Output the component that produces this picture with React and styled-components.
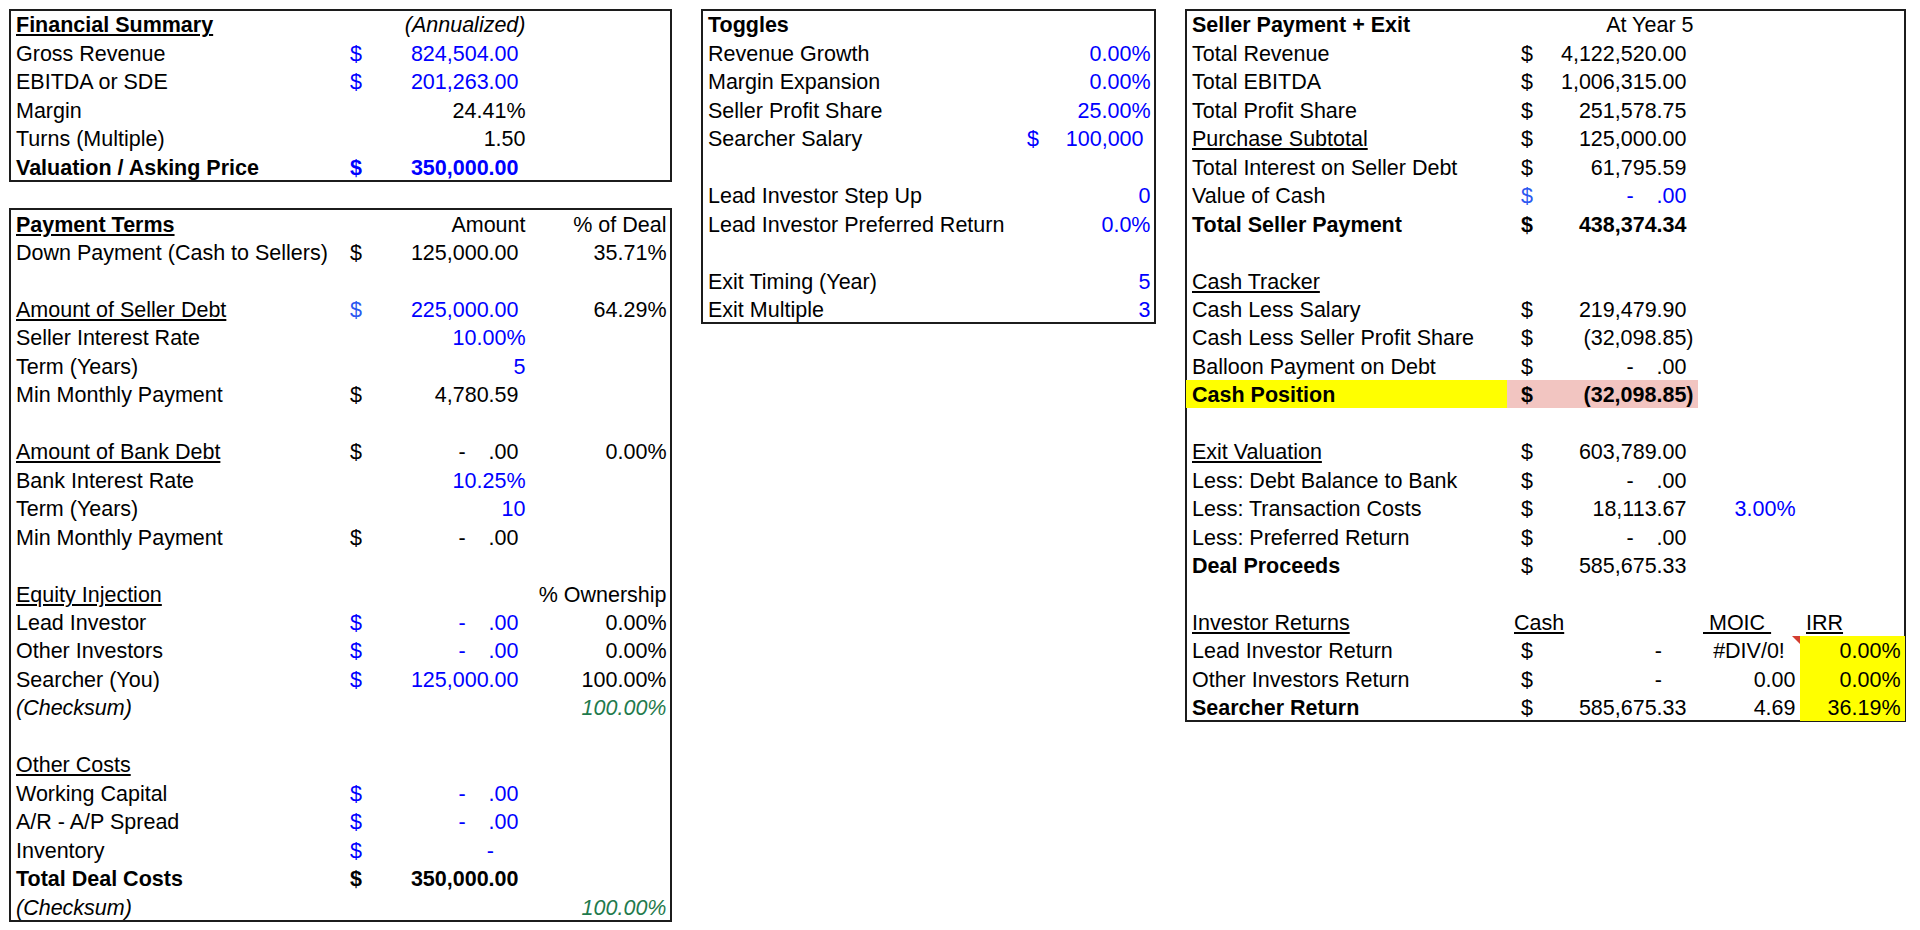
import React from 'react';
import styled, { createGlobalStyle } from 'styled-components';

// sheet metrics, taken from the spreadsheet grid
const ROW = 28.46;
const BLUE = '#0000ff';
const SOFT_BLUE = '#2b58f0';
const GREEN = '#1f7a4d';

const GlobalStyle = createGlobalStyle`
  html, body {
    margin: 0;
    background: #fff;
  }
  body {
    font-family: "Liberation Sans", Arial, sans-serif;
    color: #000;
  }
`;

const Sheet = styled.main`
  display: flex;
  align-items: flex-start;
  gap: 31px;
  padding: 10px;
  font-size: 21.5px;
`;

const Stack = styled.div`
  display: flex;
  flex-direction: column;
  gap: ${ROW}px;
`;

const Panel = styled.section`
  --cols: ${(p) => p.$cols};
  --dl: ${(p) => p.$dollar}px;
  width: ${(p) => p.$w}px;
  outline: 2px solid #1c1c1c;
  outline-offset: -1px;
`;

const Row = styled.div`
  display: grid;
  grid-template-columns: var(--cols);
  height: ${ROW}px;
`;

const Cell = styled.div`
  position: relative;
  display: flex;
  align-items: flex-end;
  justify-content: ${(p) =>
    p.$align === 'right' ? 'flex-end' : p.$align === 'center' ? 'center' : 'flex-start'};
  padding: 0 4.5px 2px ${(p) => (p.$pl != null ? p.$pl : 6)}px;
  line-height: 22px;
  white-space: pre;
  min-width: 0;
  color: ${(p) => p.$color || '#000'};
  font-weight: ${(p) => (p.$bold ? 700 : 400)};
  font-style: ${(p) => (p.$italic ? 'italic' : 'normal')};
  background: ${(p) => p.$bg || 'transparent'};
`;

const MoneyCell = styled(Cell)`
  justify-content: space-between;
  padding-left: var(--dl);
`;

const Dollar = styled.span`
  color: ${(p) => p.$color};
`;

const Amt = styled.span`
  display: inline-flex;
  gap: 23px;
  padding-right: ${(p) => (p.$neg ? 0 : p.$dash ? 31.5 : 7)}px;
`;

const U = styled.span`
  text-decoration: underline;
  text-decoration-thickness: 1.5px;
  text-underline-offset: 2px;
`;

const CommentMark = styled.span`
  position: absolute;
  top: 0;
  right: 0;
  width: 0;
  height: 0;
  border-top: 8px solid #d43d2f;
  border-left: 8px solid transparent;
`;

const Empty = () => <Row />;

// accounting style: "$" on the left, figure on the right
const Money = ({ children, color = '#000', dollar, bold, neg, dash, bg }) => (
  <MoneyCell $color={color} $bold={bold} $bg={bg}>
    <Dollar $color={dollar || color}>$</Dollar>
    <Amt $neg={neg} $dash={dash}>{children}</Amt>
  </MoneyCell>
);

// the "-   .00" zero cells
const Zero = ({ color, dollar }) => (
  <Money color={color} dollar={dollar}>
    <span>-</span>
    <span>.00</span>
  </Money>
);

const Num = ({ children, color, bold, italic, bg }) => (
  <Cell $align="right" $color={color} $bold={bold} $italic={italic} $bg={bg}>
    {children}
  </Cell>
);

const Label = ({ children, bold, italic, u, bg }) => (
  <Cell $bold={bold} $italic={italic} $bg={bg}>
    {u ? <U>{children}</U> : children}
  </Cell>
);

const LEFT_COLS = '331px 189px 1fr';
const TOGGLE_COLS = '318px 1fr';
const EXIT_COLS = '321px 191px 102px 1fr';

function FinancialSummary() {
  return (
    <Panel $w={661} $cols={LEFT_COLS} $dollar={9}>
      <Row>
        <Label bold u>Financial Summary</Label>
        <Num italic>(Annualized)</Num>
      </Row>
      <Row>
        <Label>Gross Revenue</Label>
        <Money color={BLUE}>824,504.00</Money>
      </Row>
      <Row>
        <Label>EBITDA or SDE</Label>
        <Money color={BLUE}>201,263.00</Money>
      </Row>
      <Row>
        <Label>Margin</Label>
        <Num>24.41%</Num>
      </Row>
      <Row>
        <Label>Turns (Multiple)</Label>
        <Num>1.50</Num>
      </Row>
      <Row>
        <Label bold>Valuation / Asking Price</Label>
        <Money color={BLUE} bold>350,000.00</Money>
      </Row>
    </Panel>
  );
}

function PaymentTerms() {
  return (
    <Panel $w={661} $cols={LEFT_COLS} $dollar={9}>
      <Row>
        <Label bold u>Payment Terms</Label>
        <Num>Amount</Num>
        <Num>% of Deal</Num>
      </Row>
      <Row>
        <Label>Down Payment (Cash to Sellers)</Label>
        <Money>125,000.00</Money>
        <Num>35.71%</Num>
      </Row>
      <Empty />
      <Row>
        <Label u>Amount of Seller Debt</Label>
        <Money color={BLUE} dollar={SOFT_BLUE}>225,000.00</Money>
        <Num>64.29%</Num>
      </Row>
      <Row>
        <Label>Seller Interest Rate</Label>
        <Num color={BLUE}>10.00%</Num>
      </Row>
      <Row>
        <Label>Term (Years)</Label>
        <Num color={BLUE}>5</Num>
      </Row>
      <Row>
        <Label>Min Monthly Payment</Label>
        <Money>4,780.59</Money>
      </Row>
      <Empty />
      <Row>
        <Label u>Amount of Bank Debt</Label>
        <Zero />
        <Num>0.00%</Num>
      </Row>
      <Row>
        <Label>Bank Interest Rate</Label>
        <Num color={BLUE}>10.25%</Num>
      </Row>
      <Row>
        <Label>Term (Years)</Label>
        <Num color={BLUE}>10</Num>
      </Row>
      <Row>
        <Label>Min Monthly Payment</Label>
        <Zero />
      </Row>
      <Empty />
      <Row>
        <Label u>Equity Injection</Label>
        <Cell />
        <Num>% Ownership</Num>
      </Row>
      <Row>
        <Label>Lead Investor</Label>
        <Zero color={BLUE} />
        <Num>0.00%</Num>
      </Row>
      <Row>
        <Label>Other Investors</Label>
        <Zero color={BLUE} />
        <Num>0.00%</Num>
      </Row>
      <Row>
        <Label>Searcher (You)</Label>
        <Money color={BLUE}>125,000.00</Money>
        <Num>100.00%</Num>
      </Row>
      <Row>
        <Label italic>(Checksum)</Label>
        <Cell />
        <Num italic color={GREEN}>100.00%</Num>
      </Row>
      <Empty />
      <Row>
        <Label u>Other Costs</Label>
      </Row>
      <Row>
        <Label>Working Capital</Label>
        <Zero color={BLUE} />
      </Row>
      <Row>
        <Label>A/R - A/P Spread</Label>
        <Zero color={BLUE} />
      </Row>
      <Row>
        <Label>Inventory</Label>
        <Money color={BLUE} dash>-</Money>
      </Row>
      <Row>
        <Label bold>Total Deal Costs</Label>
        <Money bold>350,000.00</Money>
      </Row>
      <Row>
        <Label italic>(Checksum)</Label>
        <Cell />
        <Num italic color={GREEN}>100.00%</Num>
      </Row>
    </Panel>
  );
}

function Toggles() {
  return (
    <Panel $w={453} $cols={TOGGLE_COLS} $dollar={7}>
      <Row>
        <Label bold>Toggles</Label>
      </Row>
      <Row>
        <Label>Revenue Growth</Label>
        <Num color={BLUE}>0.00%</Num>
      </Row>
      <Row>
        <Label>Margin Expansion</Label>
        <Num color={BLUE}>0.00%</Num>
      </Row>
      <Row>
        <Label>Seller Profit Share</Label>
        <Num color={BLUE}>25.00%</Num>
      </Row>
      <Row>
        <Label>Searcher Salary</Label>
        <Money color={BLUE}>100,000</Money>
      </Row>
      <Empty />
      <Row>
        <Label>Lead Investor Step Up</Label>
        <Num color={BLUE}>0</Num>
      </Row>
      <Row>
        <Label>Lead Investor Preferred Return</Label>
        <Num color={BLUE}>0.0%</Num>
      </Row>
      <Empty />
      <Row>
        <Label>Exit Timing (Year)</Label>
        <Num color={BLUE}>5</Num>
      </Row>
      <Row>
        <Label>Exit Multiple</Label>
        <Num color={BLUE}>3</Num>
      </Row>
    </Panel>
  );
}

function SellerPayment() {
  return (
    <Panel $w={719} $cols={EXIT_COLS} $dollar={14}>
      <Row>
        <Label bold>Seller Payment + Exit</Label>
        <Num>At Year 5</Num>
      </Row>
      <Row>
        <Label>Total Revenue</Label>
        <Money>4,122,520.00</Money>
      </Row>
      <Row>
        <Label>Total EBITDA</Label>
        <Money>1,006,315.00</Money>
      </Row>
      <Row>
        <Label>Total Profit Share</Label>
        <Money>251,578.75</Money>
      </Row>
      <Row>
        <Label u>Purchase Subtotal</Label>
        <Money>125,000.00</Money>
      </Row>
      <Row>
        <Label>Total Interest on Seller Debt</Label>
        <Money>61,795.59</Money>
      </Row>
      <Row>
        <Label>Value of Cash</Label>
        <Zero color={BLUE} dollar={SOFT_BLUE} />
      </Row>
      <Row>
        <Label bold>Total Seller Payment</Label>
        <Money bold>438,374.34</Money>
      </Row>
      <Empty />
      <Row>
        <Label u>Cash Tracker</Label>
      </Row>
      <Row>
        <Label>Cash Less Salary</Label>
        <Money>219,479.90</Money>
      </Row>
      <Row>
        <Label>Cash Less Seller Profit Share</Label>
        <Money neg>(32,098.85)</Money>
      </Row>
      <Row>
        <Label>Balloon Payment on Debt</Label>
        <Zero />
      </Row>
      <Row>
        <Label bold bg="#ffff00">Cash Position</Label>
        <Money bold neg bg="#f2c5c1">(32,098.85)</Money>
      </Row>
      <Empty />
      <Row>
        <Label u>Exit Valuation</Label>
        <Money>603,789.00</Money>
      </Row>
      <Row>
        <Label>Less: Debt Balance to Bank</Label>
        <Zero />
      </Row>
      <Row>
        <Label>Less: Transaction Costs</Label>
        <Money>18,113.67</Money>
        <Num color={BLUE}>3.00%</Num>
      </Row>
      <Row>
        <Label>Less: Preferred Return</Label>
        <Zero />
      </Row>
      <Row>
        <Label bold>Deal Proceeds</Label>
        <Money>585,675.33</Money>
      </Row>
      <Empty />
      <Row>
        <Label u>Investor Returns</Label>
        <Cell $pl={7}><U>Cash</U></Cell>
        <Cell $pl={5}><U>{'\u00a0MOIC\u00a0'}</U></Cell>
        <Cell $pl={6}><U>IRR</U></Cell>
      </Row>
      <Row>
        <Label>Lead Investor Return</Label>
        <Money dash>-</Money>
        <Cell $align="center" $pl={4.5}>
          #DIV/0!
          <CommentMark />
        </Cell>
        <Num bg="#ffff00">0.00%</Num>
      </Row>
      <Row>
        <Label>Other Investors Return</Label>
        <Money dash>-</Money>
        <Num>0.00</Num>
        <Num bg="#ffff00">0.00%</Num>
      </Row>
      <Row>
        <Label bold>Searcher Return</Label>
        <Money>585,675.33</Money>
        <Num>4.69</Num>
        <Num bg="#ffff00">36.19%</Num>
      </Row>
    </Panel>
  );
}

export default function App() {
  return (
    <>
      <GlobalStyle />
      <Sheet>
        <Stack>
          <FinancialSummary />
          <PaymentTerms />
        </Stack>
        <Toggles />
        <SellerPayment />
      </Sheet>
    </>
  );
}
